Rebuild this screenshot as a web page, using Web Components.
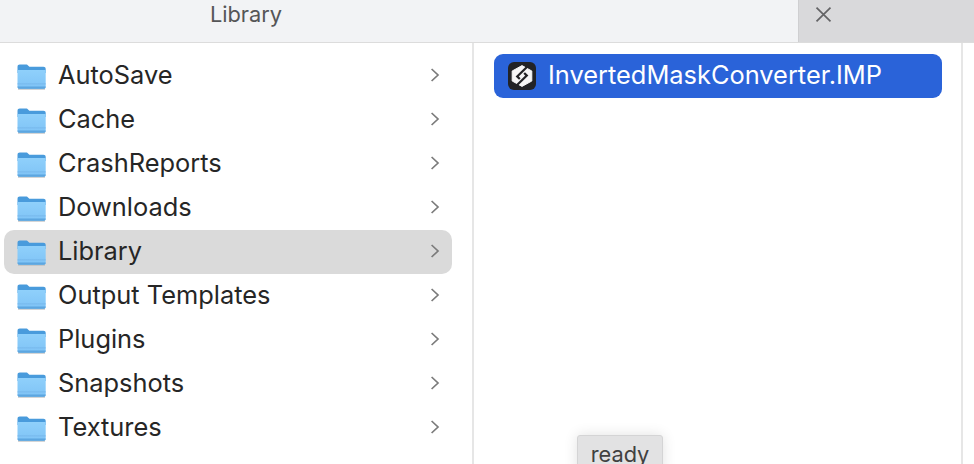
<!DOCTYPE html>
<html>
<head>
<meta charset="utf-8">
<style>
  html, body { margin: 0; height: 100%; overflow: hidden; background: #fff; }
  body { font-family: Inter, "Liberation Sans", sans-serif; color: #262626; }
</style>
</head>
<body>
<app-tabs>
  <tab-item active>Library</tab-item>
  <tab-close slot="close"></tab-close>
</app-tabs>
<column-browser>
  <browser-column>
    <folder-row>AutoSave</folder-row>
    <folder-row>Cache</folder-row>
    <folder-row>CrashReports</folder-row>
    <folder-row>Downloads</folder-row>
    <folder-row current>Library</folder-row>
    <folder-row>Output Templates</folder-row>
    <folder-row>Plugins</folder-row>
    <folder-row>Snapshots</folder-row>
    <folder-row>Textures</folder-row>
  </browser-column>
  <file-column>
    <file-row>InvertedMaskConverter.IMP</file-row>
  </file-column>
  <end-column></end-column>
</column-browser>
<status-tip>ready</status-tip>

<script>
class AppTabs extends HTMLElement {
    constructor() {
        super();
        this.shadowDOM = this.attachShadow({ mode: "open" });
        this.shadowDOM.innerHTML = `
        <style>
            :host{
                display: flex;
                height: 42px;
                border-bottom: 1px solid #dcdcdc;
                background-color: #f2f3f5;
            }
            .main{
                flex: 0 0 798px;
                display: flex;
            }
            .side{
                flex: 1;
                background-color: #d9d9db;
                border-left: 1px solid #cfcfd1;
            }
        </style>
        <div class="main"><slot></slot></div>
        <div class="side"><slot name="close"></slot></div>`;
    }
}

class TabItem extends HTMLElement {
    constructor() {
        super();
        this.attachShadow({ mode: "open" }).innerHTML = `
        <style>
            :host{
                flex: 1;
                display: flex;
                justify-content: center;
                padding: 1px 306px 0 0;
                box-sizing: border-box;
                height: 30px;
                font-size: 21.8px;
                line-height: 26px;
                color: #555557;
            }
        </style>
        <slot></slot>`;
    }
}

class TabClose extends HTMLElement {
    constructor() {
        super();
        this.attachShadow({ mode: "open" }).innerHTML = `
        <style>
            :host{
                display: block;
                padding: 7px 0 0 16px;
            }
            svg{ display: block; }
        </style>
        <svg width="17" height="15" viewBox="0 0 17 15" fill="none" stroke="#636365" stroke-width="1.7">
            <path d="M1.5 .6 15.5 14.4M15.5 .6 1.5 14.4"/>
        </svg>`;
    }
}

class ColumnBrowser extends HTMLElement {
    constructor() {
        super();
        this.attachShadow({ mode: "open" }).innerHTML = `
        <style>
            :host{
                display: grid;
                grid-template-columns: 474px 489px 1fr;
                height: 421px;
            }
        </style>
        <slot></slot>`;
    }
}

class BrowserColumn extends HTMLElement {
    constructor() {
        super();
        this.attachShadow({ mode: "open" }).innerHTML = `
        <style>
            :host{
                display: flex;
                flex-direction: column;
                padding: 11px 20px 0 4px;
                border-right: 2px solid #e6e6e6;
                box-sizing: border-box;
                min-width: 0;
            }
        </style>
        <slot></slot>`;
    }
}

class FileColumn extends HTMLElement {
    constructor() {
        super();
        this.attachShadow({ mode: "open" }).innerHTML = `
        <style>
            :host{
                display: block;
                padding: 11px 19px 0 20px;
                border-right: 2px solid #e6e6e6;
                box-sizing: border-box;
                min-width: 0;
            }
        </style>
        <slot></slot>`;
    }
}

class EndColumn extends HTMLElement {
    constructor() {
        super();
        this.attachShadow({ mode: "open" }).innerHTML = `<style>:host{ display: block; }</style>`;
    }
}

class FolderRow extends HTMLElement {
    constructor() {
        super();
        this.attachShadow({ mode: "open" }).innerHTML = `
        <style>
            :host{
                display: flex;
                align-items: center;
                height: 44px;
                flex: none;
                padding: 0 12px 0 12px;
                border-radius: 10px;
                font-size: 25.4px;
                color: #262626;
            }
            :host([current]){
                background-color: #dadada;
            }
            .icon{ flex: none; width: 31px; height: 28px; margin: -1px 11px 0 0; display: block; }
            .name{ flex: 1; white-space: nowrap; margin-top: -3px; }
            .arrow{ flex: none; display: block; margin-top: -2px; }
        </style>
        <svg class="icon" viewBox="0 0 31 28">
            <defs>
                <linearGradient id="body" x1="0" y1="0" x2="0" y2="1">
                    <stop offset="0" stop-color="#8fd0fb"/>
                    <stop offset="1" stop-color="#7fc3f6"/>
                </linearGradient>
                <filter id="soft" x="-10%" y="-10%" width="120%" height="120%"><feGaussianBlur stdDeviation=".35"/></filter>
            </defs>
            <g filter="url(#soft)">
                <path d="M2 24H29V27.6H2Z" fill="#b9b9b9"/>
                <path d="M1.5 5C1.5 3.4 2.4 2.6 3.8 2.6H10c1 0 1.6.4 2.3 1.1L13.4 4.8H27.4C28.8 4.8 29.7 5.6 29.7 7V11H1.5Z" fill="#4a9bdc"/>
                <path d="M1.5 8H29.7V24.6C29.7 26 28.9 26.8 27.5 26.8H3.7C2.3 26.8 1.5 26 1.5 24.6Z" fill="url(#body)"/>
                <path d="M1.5 21.4H29.7V22.4H1.5Z" fill="#76b8ec"/>
                <path d="M1.5 24.6H29.7C29.7 26 28.9 26.8 27.5 26.8H3.7C2.3 26.8 1.5 26 1.5 24.6Z" fill="#5da6e0"/>
            </g>
        </svg>
        <span class="name"><slot></slot></span>
        <svg class="arrow" width="10" height="14" viewBox="0 0 10 14" fill="none" stroke="#7b7b7b" stroke-width="1.7">
            <path d="M1.6 1 8 7 1.6 13"/>
        </svg>`;
    }
}

class FileRow extends HTMLElement {
    constructor() {
        super();
        this.attachShadow({ mode: "open" }).innerHTML = `
        <style>
            :host{
                display: flex;
                align-items: center;
                height: 44px;
                padding: 0 0 0 14px;
                border-radius: 9px;
                background-color: #2a63d9;
                color: #ffffff;
                font-size: 25.4px;
            }
            .icon{ flex: none; width: 28px; height: 28px; margin-right: 12px; display: block; }
            .name{ white-space: nowrap; margin-top: -3px; }
        </style>
        <svg class="icon" viewBox="0 0 28 28">
            <rect width="28" height="28" rx="6" fill="#222326"/>
            <path d="M14 3.6 23.8 9V19L14 24.4 4.2 19V9Z" fill="#f6f6f6" stroke="#f6f6f6" stroke-width="1" stroke-linejoin="round"/>
            <g fill="none" stroke="#222326" stroke-width="2.2">
                <path d="M20.5 3.5 9.2 14.4 11.8 17"/>
                <path d="M7.5 24.5 18.8 13.6 16.2 11"/>
            </g>
        </svg>
        <span class="name"><slot></slot></span>`;
    }
}

class StatusTip extends HTMLElement {
    constructor() {
        super();
        this.attachShadow({ mode: "open" }).innerHTML = `
        <style>
            :host{
                position: absolute;
                left: 577px;
                top: 435px;
                width: 86px;
                height: 40px;
                box-sizing: border-box;
                text-align: center;
                padding-top: 5px;
                font-size: 21.8px;
                line-height: 26px;
                color: #404040;
                background-color: #e2e2e3;
                border: 1px solid #d4d4d5;
                border-radius: 3px;
                box-shadow: 0 0 14px rgba(0,0,0,.12);
            }
        </style>
        <slot></slot>`;
    }
}

customElements.define("app-tabs", AppTabs);
customElements.define("tab-item", TabItem);
customElements.define("tab-close", TabClose);
customElements.define("column-browser", ColumnBrowser);
customElements.define("browser-column", BrowserColumn);
customElements.define("file-column", FileColumn);
customElements.define("end-column", EndColumn);
customElements.define("folder-row", FolderRow);
customElements.define("file-row", FileRow);
customElements.define("status-tip", StatusTip);
</script>
</body>
</html>
